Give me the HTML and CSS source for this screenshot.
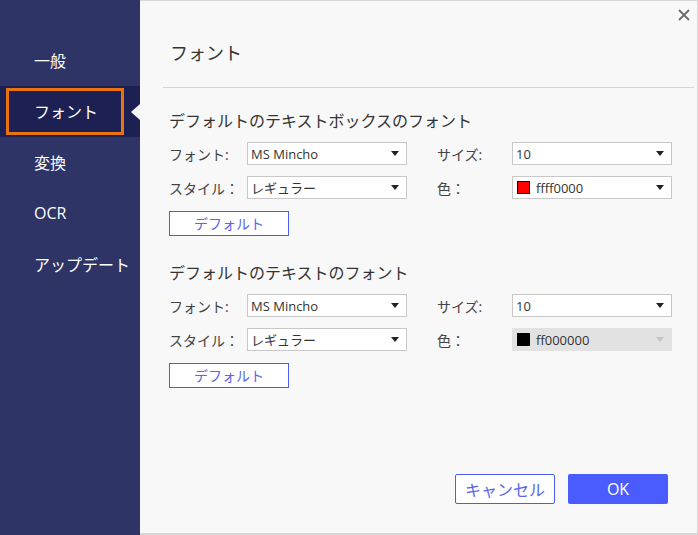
FILE: index.html
```html
<!DOCTYPE html>
<html lang="ja">
<head>
<meta charset="utf-8">
<link rel="stylesheet" href="styles.css">
</head>
<body>
<div class="app">
  <nav class="sidebar">
    <div class="nav-item"><span>一般</span></div>
    <div class="nav-item active"><span class="nav-box">フォント</span><span class="nav-arrow"></span></div>
    <div class="nav-item"><span>変換</span></div>
    <div class="nav-item"><span>OCR</span></div>
    <div class="nav-item"><span>アップデート</span></div>
  </nav>
  <main class="panel">
    <svg class="close" width="12" height="12" viewBox="0 0 12 12"><path d="M1 1L11 11M11 1L1 11" stroke="#6b6b6b" stroke-width="1.8" fill="none"/></svg>
    <h1 class="title">フォント</h1>
    <div class="divider"></div>

    <section class="section">
      <h2 class="sec-title">デフォルトのテキストボックスのフォント</h2>
      <div class="form">
        <label class="lbl">フォント:</label>
        <div class="select"><span>MS Mincho</span><i class="caret"></i></div>
        <label class="lbl lbl2">サイズ:</label>
        <div class="select"><span>10</span><i class="caret"></i></div>
        <label class="lbl">スタイル：</label>
        <div class="select"><span>レギュラー</span><i class="caret"></i></div>
        <label class="lbl lbl2">色：</label>
        <div class="select"><span class="swatch red"></span><span>ffff0000</span><i class="caret"></i></div>
      </div>
      <button class="btn-outline btn-default">デフォルト</button>
    </section>

    <section class="section second">
      <h2 class="sec-title">デフォルトのテキストのフォント</h2>
      <div class="form">
        <label class="lbl">フォント:</label>
        <div class="select"><span>MS Mincho</span><i class="caret"></i></div>
        <label class="lbl lbl2">サイズ:</label>
        <div class="select"><span>10</span><i class="caret"></i></div>
        <label class="lbl">スタイル：</label>
        <div class="select"><span>レギュラー</span><i class="caret"></i></div>
        <label class="lbl lbl2">色：</label>
        <div class="select disabled"><span class="swatch black"></span><span>ff000000</span><i class="caret"></i></div>
      </div>
      <button class="btn-outline btn-default">デフォルト</button>
    </section>

    <div class="footer">
      <button class="btn-outline btn-cancel">キャンセル</button>
      <button class="btn-ok">OK</button>
    </div>
  </main>
</div>
</body>
</html>
```

FILE: styles.css
```css
* { box-sizing: border-box; }
html, body { margin: 0; padding: 0; }
body {
  width: 698px;
  height: 535px;
  overflow: hidden;
  font-family: "Open Sans", "Noto Sans CJK JP", sans-serif;
  background: #f8f8f8;
}
.app {
  display: flex;
  width: 698px;
  height: 535px;
}
.sidebar {
  width: 140px;
  flex: none;
  background: #2e3566;
  padding-top: 35px;
  display: flex;
  flex-direction: column;
}
.nav-item {
  height: 51px;
  display: flex;
  align-items: center;
  padding-left: 34px;
  padding-bottom: 2px;
  color: #ffffff;
  font-size: 16px;
  position: relative;
}
.nav-item.active {
  background: #1d2052;
  padding-left: 6px;
  padding-top: 2px;
  padding-bottom: 2px;
  align-items: stretch;
}
.nav-box {
  width: 118px;
  border: 3px solid #e8730f;
  display: flex;
  align-items: center;
  padding-left: 25px;
  padding-bottom: 1px;
}
.nav-arrow {
  position: absolute;
  right: 0;
  top: 18px;
  width: 0;
  height: 0;
  border-top: 8px solid transparent;
  border-bottom: 8px solid transparent;
  border-right: 9px solid #f8f8f8;
}
.panel {
  width: 558px;
  flex: none;
  min-width: 0;
  position: relative;
  background: #f8f8f8;
  border-top: 1px solid #d8d8d8;
  border-right: 1px solid #d8d8d8;
  border-bottom: 2px solid #d8d8d8;
  padding: 0 0 29px 23px;
  display: flex;
  flex-direction: column;
}
.close {
  position: absolute;
  top: 8px;
  right: 7px;
}
.title {
  margin: 40px 0 0 7px;
  font-size: 18px;
  font-weight: normal;
  color: #333;
  line-height: 24px;
}
.divider {
  margin-top: 22px;
  margin-right: 3px;
  height: 1px;
  background: #d6d6d6;
}
.section {
  padding-left: 6px;
  margin-top: 22px;
}
.section.second {
  margin-top: 26px;
}
.sec-title {
  margin: 0;
  font-size: 16px;
  font-weight: normal;
  color: #333;
  line-height: 22px;
}
.form {
  margin-top: 10px;
  display: grid;
  grid-template-columns: 78px 160px 105px 160px;
  row-gap: 11px;
  grid-auto-rows: 23px;
}
.form > .lbl:nth-child(3), .form > .lbl:nth-child(7) { grid-column: 3; }
.lbl {
  font-size: 14px;
  color: #444;
  display: flex;
  align-items: center;
  white-space: nowrap;
}
.lbl2 { padding-left: 30px; }
.select {
  border: 1px solid #c8c8c8;
  background: #fff;
  display: flex;
  align-items: center;
  padding-left: 3px;
  font-size: 13px;
  color: #333;
  position: relative;
}
.select.disabled {
  border-color: #e2e2e2;
  background: #e2e2e2;
}
.caret {
  margin-left: auto;
  margin-right: 7px;
  width: 0;
  height: 0;
  border-left: 4px solid transparent;
  border-right: 4px solid transparent;
  border-top: 5px solid #222;
}
.select.disabled .caret { border-top-color: #c4c4c4; }
.swatch {
  width: 13px;
  height: 13px;
  border: 1px solid #000;
  margin: 0 6px 0 1px;
  flex: none;
}
.swatch.red { background: #ff0000; }
.swatch.black { background: #000; }
.btn-outline {
  font-family: "Open Sans", "Noto Sans CJK JP", sans-serif;
  background: #fff;
  border: 1px solid #4b5cf4;
  color: #5a64ee;
  font-size: 14px;
  padding: 0;
  cursor: pointer;
}
.btn-default {
  display: block;
  margin-top: 12px;
  width: 120px;
  height: 25px;
  line-height: 22px;
}
.footer {
  margin-top: auto;
  padding-right: 29px;
  display: flex;
  justify-content: flex-end;
  gap: 13px;
}
.btn-cancel {
  width: 100px;
  height: 30px;
  font-size: 16px;
  border-radius: 2px;
}
.btn-ok {
  width: 100px;
  height: 30px;
  border: none;
  border-radius: 2px;
  background: #4b5cff;
  color: #fff;
  font-family: "Open Sans", "Noto Sans CJK JP", sans-serif;
  font-size: 16px;
  padding: 0;
}
```
